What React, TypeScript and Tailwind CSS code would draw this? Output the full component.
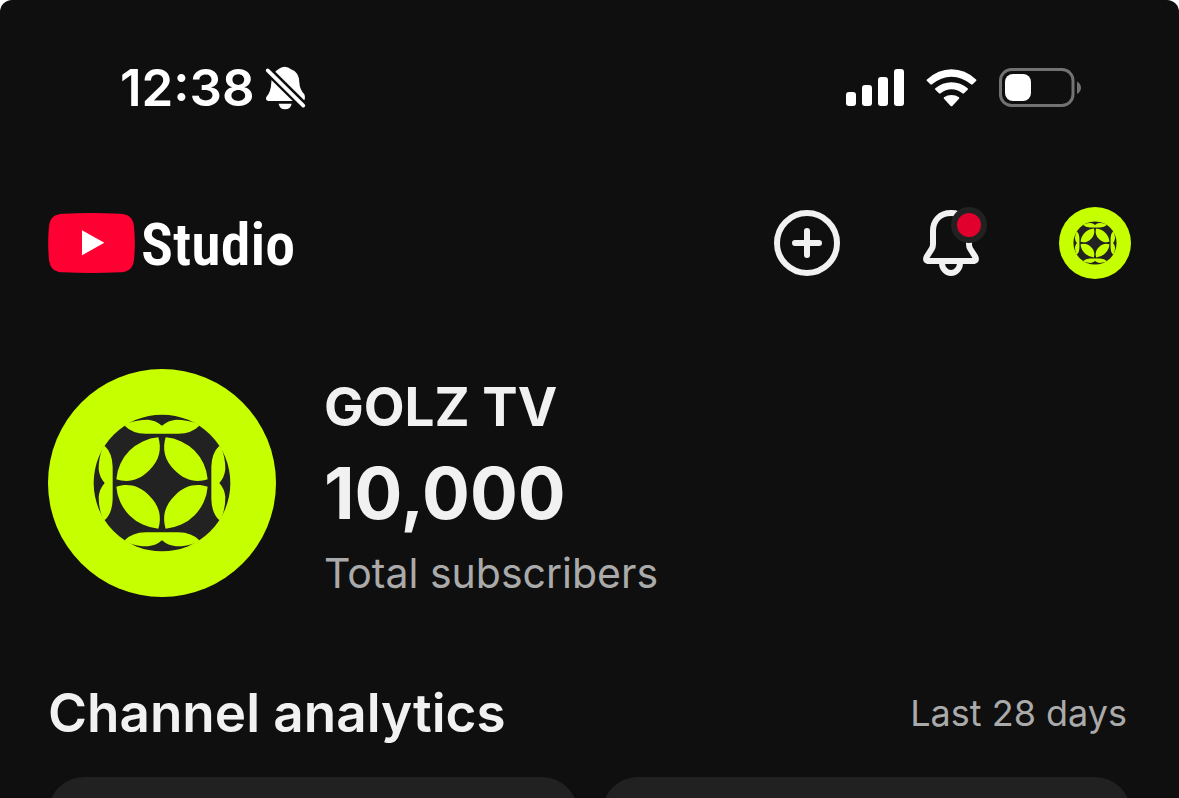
import React from 'react';

const analyticsCards = ['Views', 'Watch time'];

const App = () => {
  return (
    <div className="bg-white">
      <div className="h-screen flex flex-col overflow-hidden rounded-t-xl bg-[#0f0f0f] text-[#f1f1f1] font-['Inter',sans-serif]">
        <StatusBar />
        <Header />

        <main className="px-12">
          {/* Channel summary */}
          <section className="mt-[90px] flex items-start gap-12">
            <ChannelLogo className="size-57 shrink-0" />
            <div>
              <h1 className="text-[53px] leading-[76px] font-bold">GOLZ TV</h1>
              <p className="text-[71px] leading-[96px] font-bold">10,000</p>
              <p className="text-[41px] leading-[64px] text-[#aaaaaa]">Total subscribers</p>
            </div>
          </section>

          {/* Analytics */}
          <section className="mt-18">
            <div className="flex items-center justify-between">
              <h2 className="text-[53px] leading-[72px] font-semibold">Channel analytics</h2>
              <span className="pr-1 text-[36px] leading-[72px] text-[#aaaaaa]">Last 28 days</span>
            </div>
            <div className="mt-7 grid grid-cols-2 gap-6">
              {analyticsCards.map((card) => (
                <div key={card} className="h-60 rounded-[36px] bg-[#212121] shadow-lg"></div>
              ))}
            </div>
          </section>
        </main>
      </div>
    </div>
  );
};

// --- Sub-Components ---

const StatusBar = () => (
  <div className="flex items-center justify-between pt-14 pl-[120px] pr-[97px] text-white">
    <div className="flex items-center gap-2.5">
      <span className="text-[51px] leading-[64px] font-semibold">12:38</span>
      <MutedBell />
    </div>
    <div className="flex items-center gap-[22px]">
      <svg className="h-[38px] w-[59px]" viewBox="0 0 59 38" fill="currentColor">
        <rect x="1" y="23" width="10" height="14" rx="3" />
        <rect x="17" y="16" width="10" height="21" rx="3" />
        <rect x="33" y="8" width="10" height="29" rx="3" />
        <rect x="49" y="0" width="10" height="37" rx="3" />
      </svg>
      <svg className="h-[38px] w-[51px]" viewBox="288 56 153 114" fill="currentColor">
        <path d="M290 88 Q325 57 364.500 57 Q405 57 439 88 Q440 90 438 92 L428 102 Q426 104 423 102 Q396 79 364.500 79 Q333 79 306 102 Q303 104 301 102 L291 92 Q289 90 290 88Z" />
        <path d="M316 114 Q337 96 364.500 96 Q392 96 413 114 Q415 116 413 118 L402 129 Q400 131 397 129 Q382 117 364.500 117 Q347 117 332 129 Q329 131 327 129 L316 118 Q314 116 316 114Z" />
        <path d="M342 141 Q352 134 364.500 134 Q377 134 387 141 Q389 143 387 145 L367 167 Q364.500 169 362 167 L342 145 Q340 143 342 141Z" />
      </svg>
      <svg className="h-[40px] w-[83px]" viewBox="0 0 83 40">
        <rect x="1.500" y="1.500" width="72.500" height="36" rx="11" fill="none" stroke="#727272" strokeWidth="3" />
        <rect x="6" y="6" width="26" height="27" rx="8" fill="currentColor" />
        <path d="M78 13.500 Q82 16 82 19.700 Q82 23.500 78 26Z" fill="#727272" />
      </svg>
    </div>
  </div>
);

const MutedBell = () => (
  <svg className="h-[44px] w-[41px]" viewBox="498 49 123 132">
    <path
      d="M557 51 Q568 51 576 59 Q600 67 601 98 Q602 120 616 134 Q622 154 608 154 L508 154 Q498 152 502 142 Q516 128 517 98 Q518 70 538 59 Q546 51 557 51Z"
      fill="#fff"
    />
    <path d="M539 162 L578 162 Q575 179 558 179 Q542 179 539 162Z" fill="#fff" />
    <path d="M496 52 L624 178" stroke="#0f0f0f" strokeWidth="26" />
    <path d="M506 62 L613 168" stroke="#fff" strokeWidth="11" strokeLinecap="round" />
  </svg>
);

const Header = () => (
  <header className="mt-[87px] flex items-center justify-between px-12">
    <a href="#" className="flex items-center gap-1.5">
      <svg className="h-[60px] w-[87px]" viewBox="36 38 261 180">
        <path
          d="M82 40 Q166 36 251 40 C278 41 291 52 294 78 Q299 128 294 178 C291 204 278 215 251 216 Q166 220 82 216 C55 215 42 204 39 178 Q34 128 39 78 C42 52 55 41 82 40Z"
          fill="#ff0033"
        />
        <path d="M138 90 L205 127.500 L138 165Z" fill="#fff" />
      </svg>
      <span className="pt-1 text-[60px] leading-[68px] font-semibold text-white font-['Roboto_Condensed','Liberation_Sans_Narrow',sans-serif]">
        Studio
      </span>
    </a>

    <div className="flex items-center gap-18">
      <button aria-label="Create" className="size-18">
        <svg viewBox="0 0 72 72" fill="none" stroke="currentColor" strokeWidth="6" strokeLinecap="round">
          <circle cx="36" cy="36" r="30" />
          <path d="M36 24 V48 M24 36 H48" />
        </svg>
      </button>
      <button aria-label="Notifications" className="size-18">
        <svg viewBox="465 36 216 216" fill="none">
          <path
            d="M573 54 C540 54 519 76 519 108 V148 Q519 156 515 162 L501 184 Q493 198 508 198 H638 Q653 198 645 184 L631 162 Q627 156 627 148 V108 C627 76 606 54 573 54Z"
            stroke="currentColor"
            strokeWidth="18"
          />
          <path d="M546 204 A27 30 0 0 0 600 204" stroke="currentColor" strokeWidth="18" />
          <circle cx="627" cy="90" r="54" fill="#212121" />
          <circle cx="627" cy="90" r="36" fill="#e1002d" />
        </svg>
      </button>
      <button aria-label="Account" className="size-18">
        <ChannelLogo className="size-18" />
      </button>
    </div>
  </header>
);

const ChannelLogo = ({ className }: { className: string }) => (
  <svg className={className} viewBox="-342 -342 684 684">
    <circle r="342" fill="#c6ff00" />
    <circle r="205" fill="#222222" />
    {[0, 90, 180, 270].map((angle) => (
      <g key={angle} transform={`rotate(${angle})`} fill="#c6ff00">
        <path d="M-11 -137 A137 137 0 0 0 -137 -11 C-104 -1 -69 -6 -38 -38 C-6 -69 -1 -104 -11 -137Z" />
        <path d="M-112 -172 L-103 -179 Q-76 -190 -42 -190 Q-18 -188 0 -172 Q18 -188 42 -190 Q76 -190 103 -179 L112 -172 Q90 -149 49 -148 L-49 -148 Q-90 -149 -112 -172Z" />
      </g>
    ))}
  </svg>
);

export default App;
